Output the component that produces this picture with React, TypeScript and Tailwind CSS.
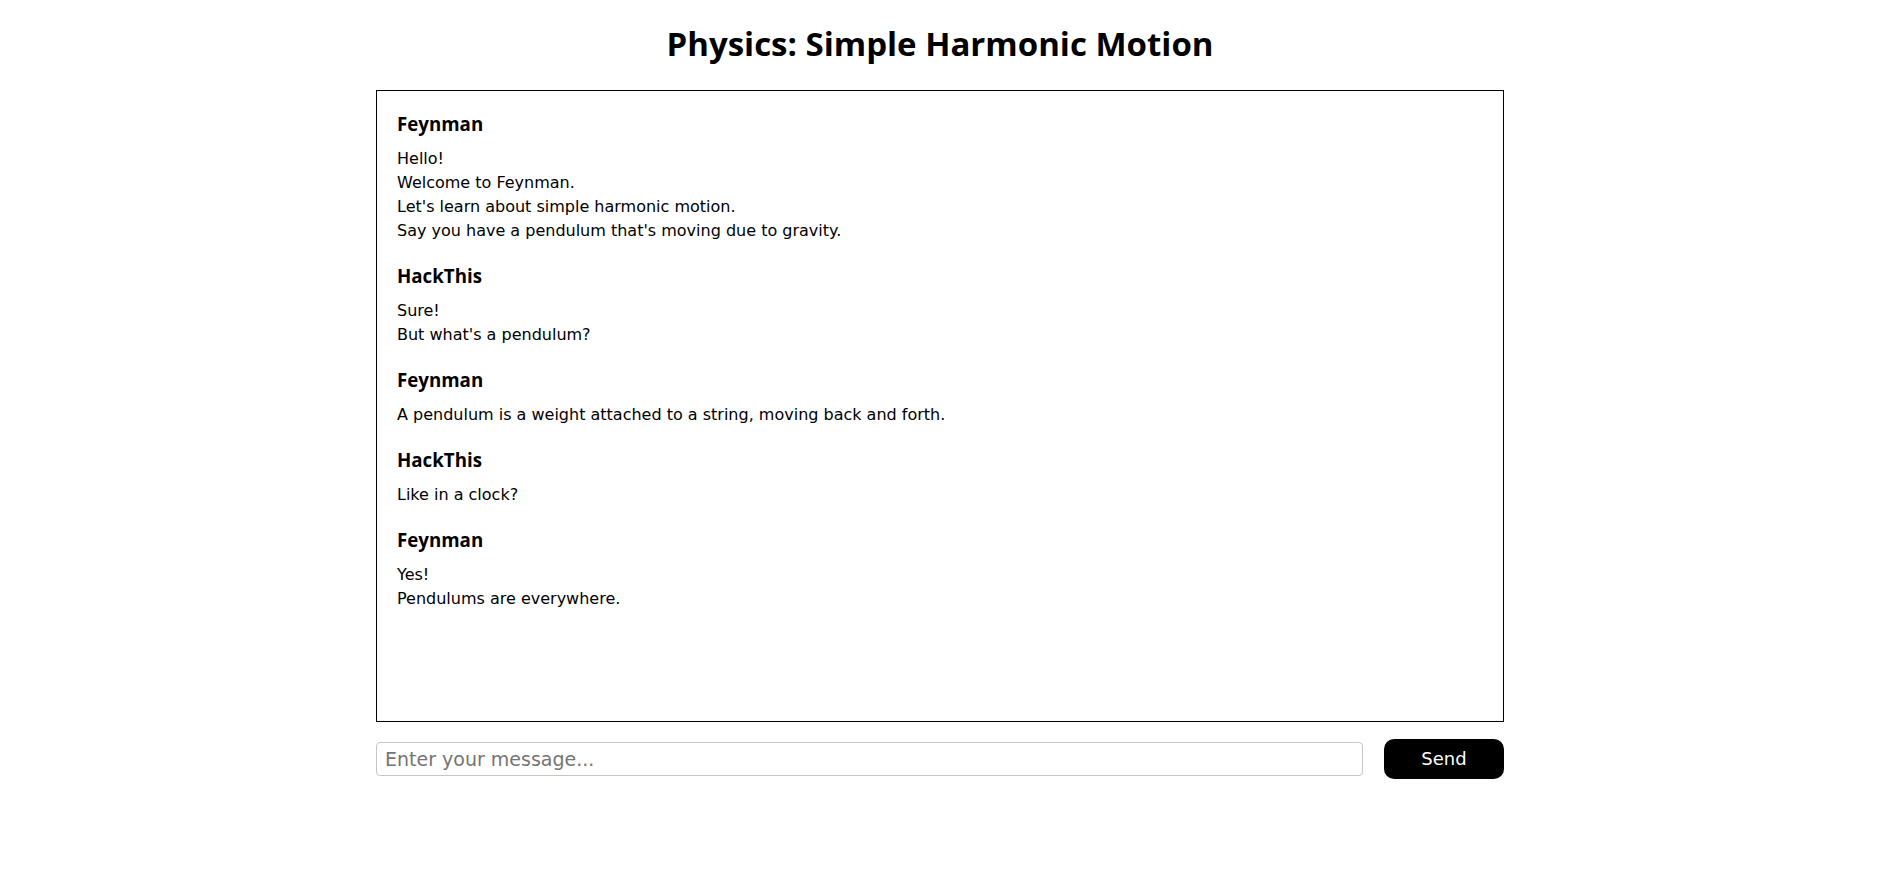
import React, { useState } from "react";

interface Message {
  author: string;
  lines: string[];
}

const messages: Message[] = [
  {
    author: "Feynman",
    lines: [
      "Hello!",
      "Welcome to Feynman.",
      "Let's learn about simple harmonic motion.",
      "Say you have a pendulum that's moving due to gravity.",
    ],
  },
  { author: "HackThis", lines: ["Sure!", "But what's a pendulum?"] },
  { author: "Feynman", lines: ["A pendulum is a weight attached to a string, moving back and forth."] },
  { author: "HackThis", lines: ["Like in a clock?"] },
  { author: "Feynman", lines: ["Yes!", "Pendulums are everywhere."] },
];

const App: React.FC = () => {
  const [draft, setDraft] = useState("");

  return (
    <div className="min-h-screen bg-white text-black font-['DejaVu_Sans',sans-serif]">
      <div className="mx-auto w-[1128px] pt-[20px]">
        {/* Title */}
        <h1 className="text-center font-['Open_Sans',sans-serif] text-[33px] font-bold leading-[48px] mb-[22px]">
          Physics: Simple Harmonic Motion
        </h1>

        {/* Chat log */}
        <div className="h-[632px] border border-black p-5 overflow-y-auto">
          {messages.map((msg, i) => (
            <div key={i} className="mb-[20px]">
              <div className="font-['Open_Sans',sans-serif] text-[18.72px] font-bold leading-[26px] mb-[10px]">
                {msg.author}
              </div>
              {msg.lines.map((line, j) => (
                <div key={j} className="text-base leading-6">
                  {line}
                </div>
              ))}
            </div>
          ))}
        </div>

        {/* Input row */}
        <div className="mt-[17px] flex items-center gap-[21px]">
          <input
            value={draft}
            onChange={(e) => setDraft(e.target.value)}
            placeholder="Enter your message..."
            className="flex-1 h-[34px] rounded border border-[#c9c4bf] px-[8px] text-[19px] placeholder:text-[#757575] outline-none"
          />
          <button className="w-[120px] h-10 rounded-[10px] bg-black text-white text-lg">Send</button>
        </div>
      </div>
    </div>
  );
};

export default App;
